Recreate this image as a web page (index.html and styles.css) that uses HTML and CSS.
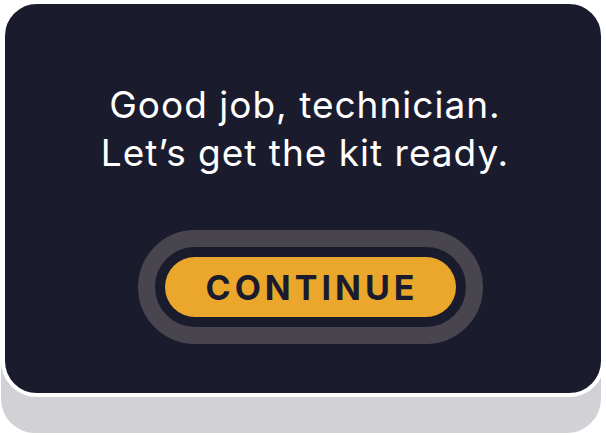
FILE: index.html
```html
<!DOCTYPE html>
<html>
<head>
<meta charset="utf-8">
<link rel="stylesheet" href="styles.css">
</head>
<body>
<div class="card">
  <p class="message">Good job, technician.<br>Let’s get the kit ready.</p>
  <div class="ring">
    <button class="continue">CONTINUE</button>
  </div>
</div>
</body>
</html>
```
FILE: styles.css
```css
html, body {
  margin: 0;
  padding: 0;
  background: #ffffff;
}
body {
  width: 606px;
  height: 435px;
  overflow: hidden;
}
.card {
  box-sizing: border-box;
  margin-left: 1px;
  width: 604px;
  height: 397px;
  background: #1b1b2e;
  border: 4px solid #ffffff;
  border-radius: 36px;
  box-shadow: -2px 38px 0 -2px #d2d1d6;
  display: flex;
  flex-direction: column;
  align-items: center;
  padding-top: 77px;
}
.message {
  margin: 0;
  color: #ffffff;
  font-family: "Inter", "Liberation Sans", sans-serif;
  font-weight: 400;
  font-size: 37px;
  letter-spacing: 1px;
  line-height: 48px;
  text-align: center;
  margin-left: 4px;
}
.ring {
  margin-top: 53px;
  margin-left: 14px;
  border: 17px solid #48454f;
  border-radius: 60px;
  padding: 10px;
  background: #1b1b2e;
  display: flex;
}
.continue {
  width: 291px;
  height: 60px;
  border: none;
  border-radius: 30px;
  background: #eaa72c;
  color: #1b1b2e;
  font-family: "Inter", "Liberation Sans", sans-serif;
  font-weight: 700;
  font-size: 34px;
  letter-spacing: 4px;
  padding: 0;
  padding-left: 4px;
}
```
